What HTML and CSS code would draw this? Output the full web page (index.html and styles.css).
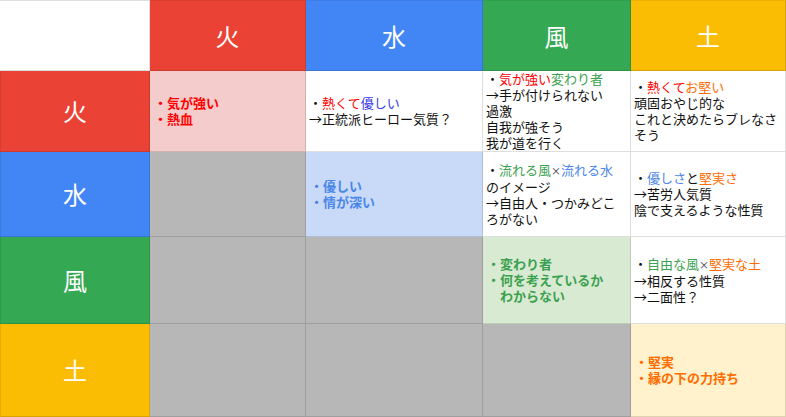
FILE: index.html
```html
<!DOCTYPE html>
<html lang="ja">
<head>
<meta charset="utf-8">
<title>属性相性表</title>
<link rel="stylesheet" href="styles.css">
</head>
<body>
<div class="table">
  <div class="cell corner top"></div>
  <div class="cell head fire top">火</div>
  <div class="cell head water top">水</div>
  <div class="cell head wind top">風</div>
  <div class="cell head earth top">土</div>

  <div class="cell head fire left">火</div>
  <div class="cell txt bold red bg-fire">
    <p>・気が強い<br>・熱血</p>
  </div>
  <div class="cell txt">
    <p>・<span class="c-red">熱くて</span><span class="c-navy">優しい</span><br>→正統派ヒーロー気質？</p>
  </div>
  <div class="cell txt">
    <p>・<span class="c-red">気が強い</span><span class="c-green">変わり者</span><br>→手が付けられない<br>過激<br>自我が強そう<br>我が道を行く</p>
  </div>
  <div class="cell txt">
    <p>・<span class="c-red">熱くて</span><span class="c-orange">お堅い</span><br>頑固おやじ的な<br>これと決めたらブレなさそう</p>
  </div>

  <div class="cell head water left">水</div>
  <div class="cell gray"></div>
  <div class="cell txt bold blue bg-water">
    <p>・優しい<br>・情が深い</p>
  </div>
  <div class="cell txt">
    <p>・<span class="c-green">流れる風</span><span class="times">×</span><span class="c-blue">流れる水</span><br>のイメージ<br>→自由人・つかみどころがない</p>
  </div>
  <div class="cell txt">
    <p>・<span class="c-blue">優しさ</span>と<span class="c-orange">堅実さ</span><br>→苦労人気質<br>陰で支えるような性質</p>
  </div>

  <div class="cell head wind left">風</div>
  <div class="cell gray"></div>
  <div class="cell gray"></div>
  <div class="cell txt bold green bg-wind">
    <p>・変わり者<br>・何を考えているか<br>　わからない</p>
  </div>
  <div class="cell txt">
    <p>・<span class="c-green">自由な風</span><span class="times">×</span><span class="c-orange">堅実な土</span><br>→相反する性質<br>→二面性？</p>
  </div>

  <div class="cell head earth left">土</div>
  <div class="cell gray"></div>
  <div class="cell gray"></div>
  <div class="cell gray"></div>
  <div class="cell txt bold orange bg-earth">
    <p>・堅実<br>・縁の下の力持ち</p>
  </div>
</div>
</body>
</html>
```

FILE: styles.css
```css
html, body {
  margin: 0;
  padding: 0;
  background: #ffffff;
}

body {
  font-family: "Noto Sans CJK JP", "Noto Sans", sans-serif;
  color: #111111;
}

.table {
  display: grid;
  grid-template-columns: 150px 156px 177px 148px 155px;
  grid-template-rows: 71px 81px 85px 87px 93px;
  width: 786px;
  height: 417px;
  overflow: hidden;
}

.cell {
  box-sizing: border-box;
  border-right: 1px solid rgba(0, 0, 0, 0.13);
  border-bottom: 1px solid rgba(0, 0, 0, 0.13);
  overflow: hidden;
}

.top {
  border-top: 1px solid rgba(0, 0, 0, 0.13);
}

.left {
  border-left: 1px solid rgba(0, 0, 0, 0.08);
}

.corner {
  background: #ffffff;
}

.head {
  display: flex;
  align-items: center;
  justify-content: center;
  color: #ffffff;
  font-size: 24px;
  line-height: 1;
}

.head.fire { background: #ea4335; }
.head.water { background: #4285f4; }
.head.wind { background: #34a853; }
.head.earth { background: #fbbc04; }

.head.top {
  border-top-color: rgba(0, 0, 0, 0.06);
}

.gray {
  background: #b7b7b7;
}

.txt {
  display: flex;
  align-items: center;
  padding: 0 3px 0 3px;
  font-size: 13px;
  line-height: 16px;
  background: #ffffff;
  overflow: visible;
}

.txt p {
  margin: 0;
}

.bold {
  font-weight: bold;
  padding-left: 4px;
}

.bg-fire { background: #f4cccc; }
.bg-water { background: #c9daf8; }
.bg-wind { background: #d9ead3; }
.bg-earth { background: #fff2cc; }

.red { color: #ff0000; }
.blue { color: #4a86e8; }
.green { color: #3aa14f; }
.orange { color: #ff6d01; }

.c-red { color: #ff0000; }
.c-navy { color: #3b3be6; }
.c-green { color: #3aa14f; }
.c-blue { color: #4a86e8; }
.c-orange { color: #ff6d01; }

.times {
  font-size: 10px;
  color: #333333;
}
```
